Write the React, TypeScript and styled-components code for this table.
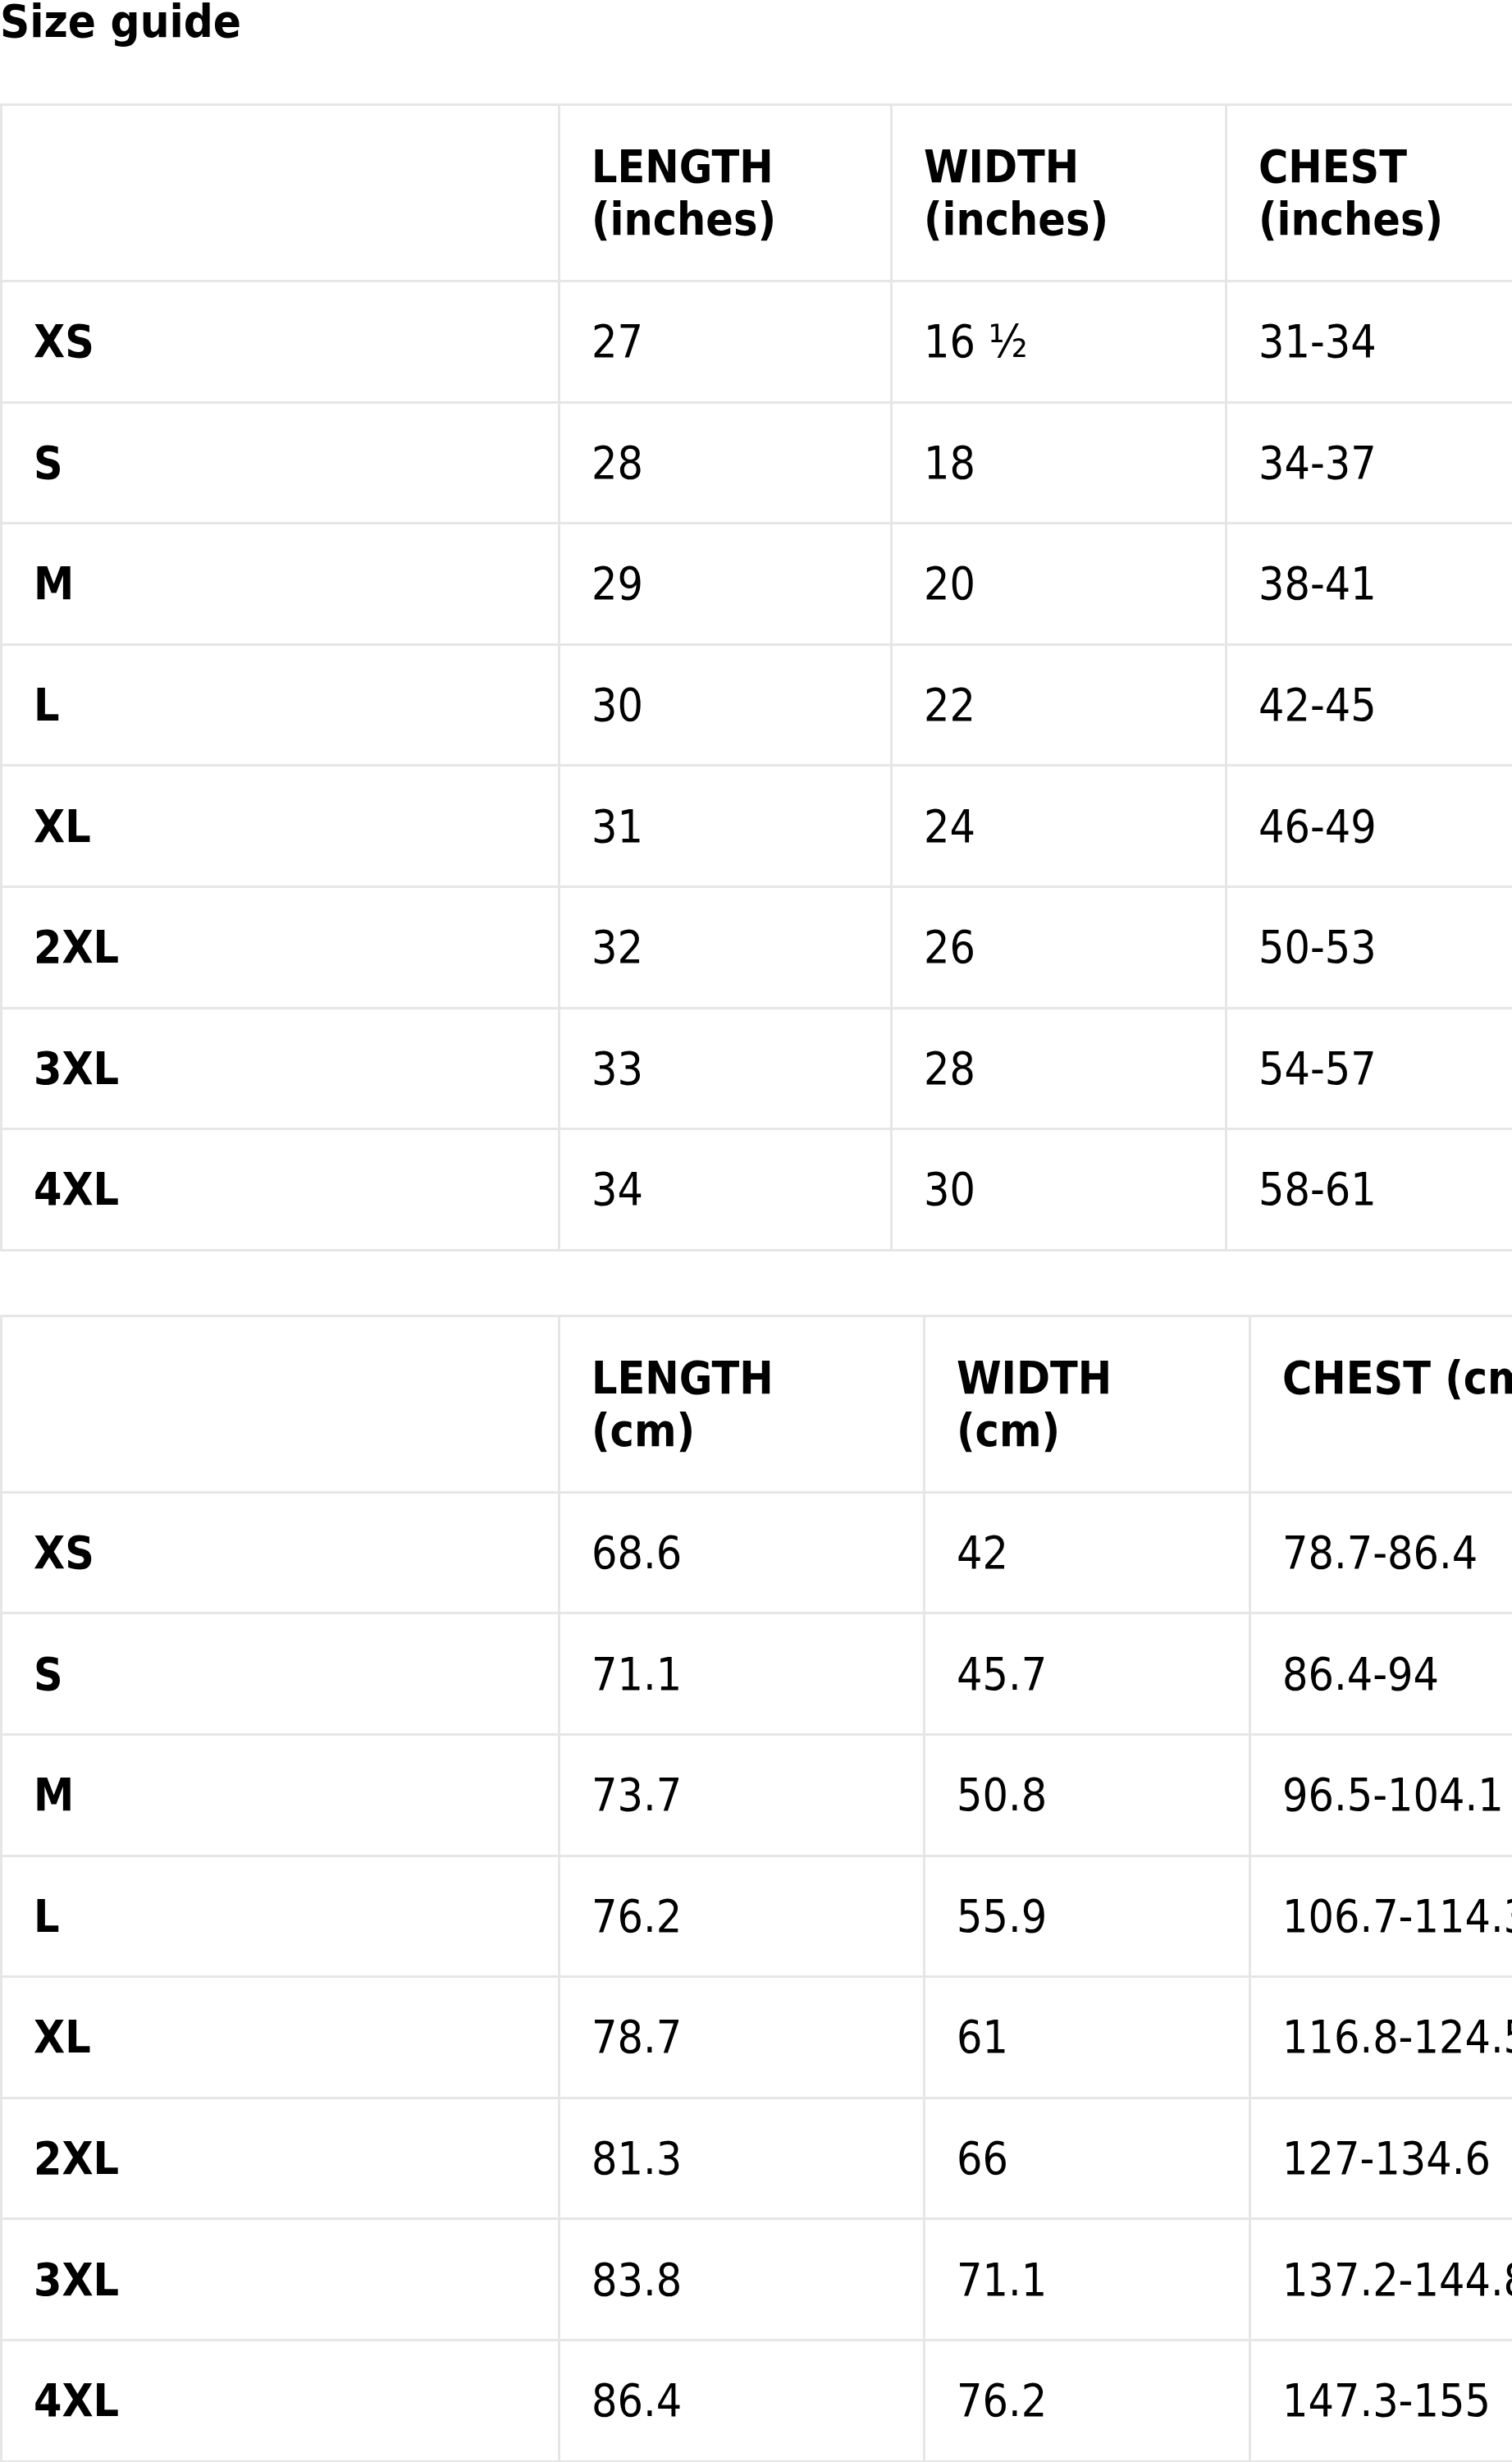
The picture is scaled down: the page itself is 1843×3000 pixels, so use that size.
import React from "react";
import styled, { createGlobalStyle } from "styled-components";

const GlobalStyle = createGlobalStyle`
  html, body {
    margin: 0;
    padding: 0;
    background: #ffffff;
    overflow: hidden;
  }
  body {
    font-family: "DejaVu Sans Condensed", "DejaVu Sans", sans-serif;
    font-stretch: semi-condensed;
    color: #000;
  }
`;

const Page = styled.div`
  width: 1843px;
`;

const Title = styled.h2`
  margin: -3px 0 72px 0;
  font-size: 56px;
  line-height: 57px;
  font-weight: 700;
`;

const Table = styled.table<{ $width: number; $gap?: number }>`
  border-collapse: collapse;
  table-layout: fixed;
  width: ${(p) => p.$width}px;
  margin-bottom: ${(p) => p.$gap ?? 0}px;
  font-size: 55px;
  line-height: normal;
`;

const HeadCell = styled.th`
  border: 3px solid #e6e6e6;
  padding: 42px 38px;
  text-align: left;
  vertical-align: top;
  font-weight: 700;
  white-space: pre-line;
`;

const SizeCell = styled.td`
  border: 3px solid #e6e6e6;
  padding: 40.3px 38px;
  font-weight: 700;
`;

const ValueCell = styled.td`
  border: 3px solid #e6e6e6;
  padding: 40.3px 38px;
  font-weight: 400;
`;

type Guide = {
  cols: number[];
  head: string[];
  rows: string[][];
  gap: number;
};

const sizes = ["XS", "S", "M", "L", "XL", "2XL", "3XL", "4XL"];

const inches: Guide = {
  cols: [680, 405, 408, 460],
  head: ["", "LENGTH\n(inches)", "WIDTH\n(inches)", "CHEST\n(inches)"],
  rows: [
    ["27", "16 ½", "31-34"],
    ["28", "18", "34-37"],
    ["29", "20", "38-41"],
    ["30", "22", "42-45"],
    ["31", "24", "46-49"],
    ["32", "26", "50-53"],
    ["33", "28", "54-57"],
    ["34", "30", "58-61"],
  ],
  gap: 77,
};

const cm: Guide = {
  cols: [680, 445, 397, 460],
  head: ["", "LENGTH\n(cm)", "WIDTH\n(cm)", "CHEST (cm)"],
  rows: [
    ["68.6", "42", "78.7-86.4"],
    ["71.1", "45.7", "86.4-94"],
    ["73.7", "50.8", "96.5-104.1"],
    ["76.2", "55.9", "106.7-114.3"],
    ["78.7", "61", "116.8-124.5"],
    ["81.3", "66", "127-134.6"],
    ["83.8", "71.1", "137.2-144.8"],
    ["86.4", "76.2", "147.3-155"],
  ],
  gap: 0,
};

function GuideTable({ guide }: { guide: Guide }) {
  const width = guide.cols.reduce((a, b) => a + b, 0);
  return (
    <Table $width={width} $gap={guide.gap}>
      <colgroup>
        {guide.cols.map((w, i) => (
          <col key={i} style={{ width: w }} />
        ))}
      </colgroup>
      <thead>
        <tr>
          {guide.head.map((h, i) => (
            <HeadCell key={i}>{h}</HeadCell>
          ))}
        </tr>
      </thead>
      <tbody>
        {guide.rows.map((row, r) => (
          <tr key={sizes[r]}>
            <SizeCell>{sizes[r]}</SizeCell>
            {row.map((v, i) => (
              <ValueCell key={i}>{v}</ValueCell>
            ))}
          </tr>
        ))}
      </tbody>
    </Table>
  );
}

export default function App() {
  return (
    <Page>
      <GlobalStyle />
      <Title>Size guide</Title>
      <GuideTable guide={inches} />
      <GuideTable guide={cm} />
    </Page>
  );
}
